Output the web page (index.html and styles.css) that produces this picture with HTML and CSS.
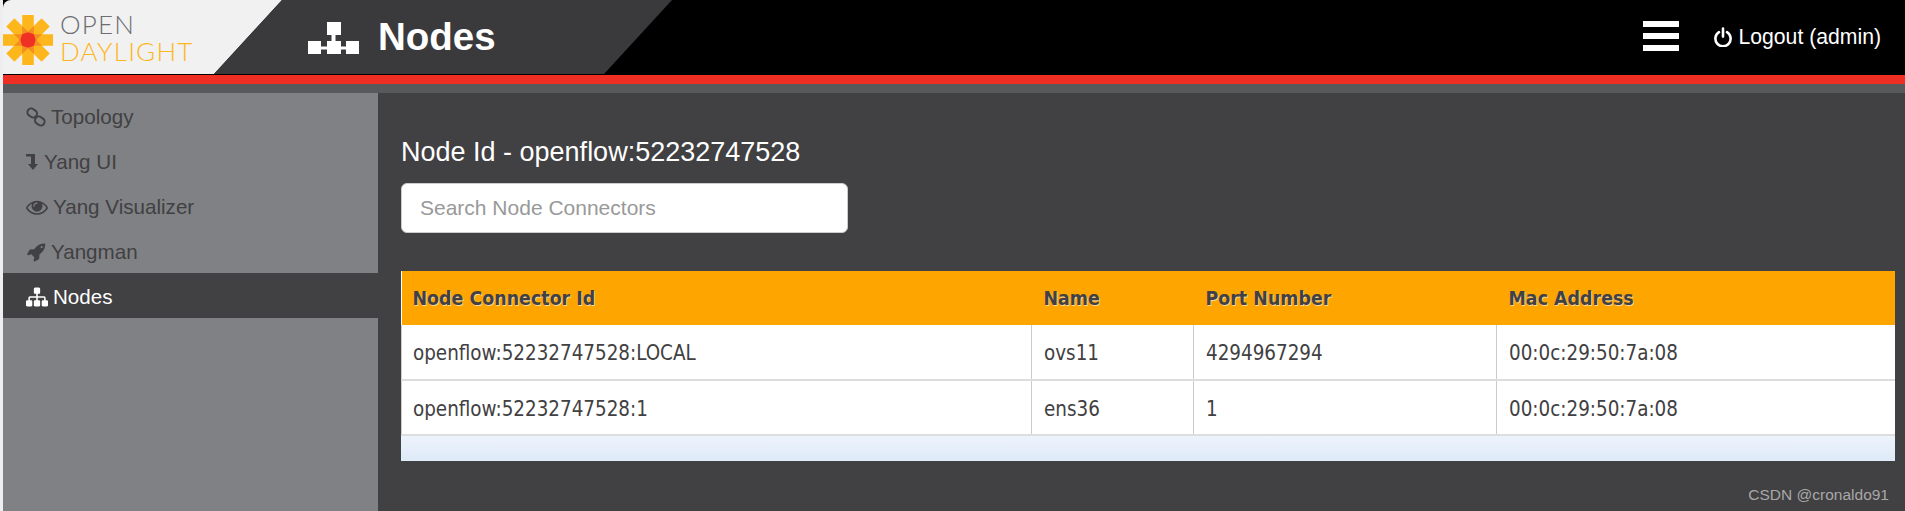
FILE: index.html
```html
<!DOCTYPE html>
<html lang="en">
<head>
    <meta charset="UTF-8">
    <meta name="viewport" content="width=device-width, initial-scale=1.0">
    <title>Nodes</title>
    <link rel="stylesheet" href="styles.css">
</head>
<body>
    <div class="page">
        <header class="topbar">
            <div class="logo-panel">
                <svg class="logo-mark" viewBox="0 0 52 52">
                    <g fill="#fdb61c">
                        <rect x="20" y="0" width="12" height="52"/>
                        <rect x="20" y="0" width="12" height="52" transform="rotate(45 26 26)"/>
                        <rect x="20" y="0" width="12" height="52" transform="rotate(90 26 26)"/>
                        <rect x="20" y="0" width="12" height="52" transform="rotate(135 26 26)"/>
                    </g>
                    <g fill="#f68b1f">
                        <polygon points="41.700,26 26,19.500 10.300,26 26,32.500" transform="rotate(22.500 26 26)"/>
                        <polygon points="41.700,26 26,19.500 10.300,26 26,32.500" transform="rotate(67.500 26 26)"/>
                        <polygon points="41.700,26 26,19.500 10.300,26 26,32.500" transform="rotate(112.500 26 26)"/>
                        <polygon points="41.700,26 26,19.500 10.300,26 26,32.500" transform="rotate(157.500 26 26)"/>
                    </g>
                    <polygon fill="#ee3124" points="26,18 32,20 34,26 32,32 26,34 20,32 18,26 20,20"/>
                </svg>
                <div class="logo-text">
                    <span class="logo-open">OPEN</span>
                    <span class="logo-day">DAYLIGHT</span>
                </div>
            </div>
            <div class="title-panel">
                <svg class="title-icon" viewBox="0 0 51 32">
                    <g fill="#fff">
                        <rect x="19" y="0" width="14" height="13"/>
                        <rect x="23.500" y="13" width="4" height="6"/>
                        <rect x="0" y="19" width="13" height="13"/>
                        <rect x="19" y="19" width="14" height="13"/>
                        <rect x="38" y="19" width="13" height="13"/>
                        <rect x="13" y="24.500" width="25" height="3"/>
                    </g>
                </svg>
                <h1 class="page-title">Nodes</h1>
            </div>
            <div class="top-actions">
                <div class="burger"><span></span><span></span><span></span></div>
                <a class="logout">
                    <svg class="power-icon" viewBox="0 0 18 20">
                        <path fill="none" stroke="#fff" stroke-width="2.600" stroke-linecap="round" d="M5 5.200a7.600 7.600 0 1 0 8 0M9 1.600v8"/>
                    </svg>
                    Logout (admin)
                </a>
            </div>
        </header>
        <div class="red-bar"></div>
        <div class="grey-bar"></div>

        <div class="layout">
            <nav class="sidebar">
                <a class="nav-item">
                    <svg class="nav-icon link-icon" viewBox="0 0 20 20">
                        <g fill="none" stroke="#414042" stroke-width="2">
                            <rect x="1.200" y="2.200" width="10" height="7.600" rx="3.800" transform="rotate(35 6.200 6)"/>
                            <rect x="8.800" y="10.200" width="10" height="7.600" rx="3.800" transform="rotate(35 13.800 14)"/>
                        </g>
                    </svg>
                    Topology
                </a>
                <a class="nav-item">
                    <svg class="nav-icon level-icon" viewBox="0 0 12 16">
                        <path fill="#414042" d="M0 0h9v10h3l-5 6-5-6h3V2.500H0z"/>
                    </svg>
                    Yang UI
                </a>
                <a class="nav-item">
                    <svg class="nav-icon eye-icon" viewBox="0 0 1792 1792">
                        <path fill="#414042" d="M1664 960q-152-236-381-353 61 104 61 225 0 185-131.500 316.500t-316.500 131.500-316.500-131.500-131.500-316.500q0-121 61-225-229 117-381 353 133 205 333.500 326.500t434.500 121.500 434.500-121.500 333.500-326.500zm-720-384q0-20-14-34t-34-14q-125 0-214.500 89.500t-89.500 214.500q0 20 14 34t34 14 34-14 14-34q0-86 61-147t147-61q20 0 34-14t14-34zm848 384q0 34-20 69-140 230-376.500 368.500t-499.500 138.500-499.500-139-376.500-368q-20-35-20-69t20-69q140-229 376.500-368t499.500-139 499.500 139 376.500 368q20 35 20 69z"/>
                    </svg>
                    Yang Visualizer
                </a>
                <a class="nav-item">
                    <svg class="nav-icon rocket-icon" viewBox="0 0 1792 1792">
                        <path fill="#414042" d="M1504 448q0-40-28-68t-68-28-68 28-28 68 28 68 68 28 68-28 28-68zm224-288q0 249-75.500 430.500t-253.500 360.500q-81 80-195 176l-20 379q-2 16-16 26l-384 224q-7 4-16 4-12 0-23-9l-64-64q-13-14-8-32l85-276-281-281-276 85q-3 1-9 1-14 0-23-9l-64-64q-17-19-5-39l224-384q10-14 26-16l379-20q96-114 176-195 188-187 358-258t431-71q14 0 24 9.500t10 22.500z"/>
                    </svg>
                    Yangman
                </a>
                <a class="nav-item active">
                    <svg class="nav-icon sitemap-icon" viewBox="0 0 1792 1792">
                        <path fill="#fff" d="M1792 1248v320q0 40-28 68t-68 28h-320q-40 0-68-28t-28-68v-320q0-40 28-68t68-28h96v-192h-512v192h96q40 0 68 28t28 68v320q0 40-28 68t-68 28h-320q-40 0-68-28t-28-68v-320q0-40 28-68t68-28h96v-192h-512v192h96q40 0 68 28t28 68v320q0 40-28 68t-68 28h-320q-40 0-68-28t-28-68v-320q0-40 28-68t68-28h96v-192q0-52 38-90t90-38h512v-192h-96q-40 0-68-28t-28-68v-320q0-40 28-68t68-28h320q40 0 68 28t28 68v320q0 40-28 68t-68 28h-96v192h512q52 0 90 38t38 90v192h96q40 0 68 28t28 68z"/>
                    </svg>
                    Nodes
                </a>
            </nav>

            <main class="content">
                <h2 class="node-title">Node Id - openflow:52232747528</h2>
                <input class="search" type="text" placeholder="Search Node Connectors">

                <table class="nodes-table">
                    <colgroup>
                        <col class="col-id">
                        <col class="col-name">
                        <col class="col-port">
                        <col class="col-mac">
                    </colgroup>
                    <thead>
                        <tr>
                            <th>Node Connector Id</th>
                            <th>Name</th>
                            <th>Port Number</th>
                            <th>Mac Address</th>
                        </tr>
                    </thead>
                    <tbody>
                        <tr>
                            <td>openflow:52232747528:LOCAL</td>
                            <td>ovs11</td>
                            <td>4294967294</td>
                            <td>00:0c:29:50:7a:08</td>
                        </tr>
                        <tr>
                            <td>openflow:52232747528:1</td>
                            <td>ens36</td>
                            <td>1</td>
                            <td>00:0c:29:50:7a:08</td>
                        </tr>
                    </tbody>
                </table>
                <div class="table-foot"></div>
                <div class="watermark">CSDN @cronaldo91</div>
            </main>
        </div>
    </div>
</body>
</html>
```

FILE: styles.css
```css
html, body {
    height: 100%;
}
body {
    margin: 0;
    overflow: hidden;
    background-color: #eeeef0;
    font-family: "Liberation Sans", Arial, sans-serif;
}
.page {
    display: flex;
    flex-direction: column;
    height: 100%;
    margin-left: 3px;
}

/* top bar */
.topbar {
    display: flex;
    align-items: stretch;
    height: 74px;
    border-bottom: 1px solid #000;
    background-color: #000;
}
.logo-panel {
    display: flex;
    flex: none;
    width: 279px;
    background-color: #f1f1f2;
    border-top-left-radius: 8px;
    clip-path: polygon(0 0, 100% 0, 211px 100%, 0 100%);
}
.logo-mark {
    flex: none;
    width: 50px;
    height: 50px;
    margin: 15px 0 0 0;
}
.logo-text {
    display: flex;
    flex-direction: column;
    margin: 11px 0 0 7px;
    font-family: Lato, "Liberation Sans", sans-serif;
    font-weight: 300;
    font-size: 26px;
    line-height: 27px;
    letter-spacing: 1.200px;
}
.logo-open {
    color: #6d6e71;
}
.logo-day {
    color: #fdb61c;
}
.title-panel {
    display: flex;
    align-items: center;
    flex: none;
    width: 458px;
    margin-left: -68px;
    background-color: #3a3a3c;
    clip-path: polygon(68px 0, 100% 0, 390px 100%, 0 100%);
}
.title-icon {
    width: 51px;
    height: 32px;
    margin: 2px 0 0 94px;
}
.page-title {
    margin: 0 0 0 19px;
    color: #fff;
    font-size: 38.500px;
    font-weight: bold;
}
.top-actions {
    display: flex;
    align-items: center;
    margin-left: auto;
    padding-right: 24px;
    color: #fff;
}
.burger {
    display: flex;
    flex-direction: column;
    gap: 6px;
    width: 36px;
    margin-right: 35px;
    margin-top: -2px;
}
.burger span {
    height: 6px;
    background-color: #fff;
}
.logout {
    display: flex;
    align-items: center;
    gap: 6px;
    font-size: 21.200px;
}
.power-icon {
    width: 18px;
    height: 20px;
}
.red-bar {
    flex: none;
    height: 9px;
    background-color: #ef2e24;
}
.grey-bar {
    flex: none;
    height: 9px;
    background-color: #58595b;
}

/* sidebar + content */
.layout {
    display: flex;
    flex: 1;
    min-height: 0;
}
.sidebar {
    flex: none;
    width: 375px;
    background-color: #808184;
}
.nav-item {
    display: flex;
    align-items: center;
    height: 45px;
    padding: 2px 0 0 23px;
    box-sizing: border-box;
    color: #414042;
    font-size: 20.600px;
}
.nav-item.active {
    background-color: #414042;
    color: #fff;
}
.nav-icon {
    flex: none;
    margin-right: 5px;
}
.link-icon {
    width: 20px;
    height: 20px;
}
.level-icon {
    width: 12px;
    height: 16px;
    margin-right: 6px;
}
.eye-icon {
    width: 22px;
    height: 22px;
}
.rocket-icon {
    width: 20px;
    height: 20px;
}
.sitemap-icon {
    width: 22px;
    height: 22px;
}
.content {
    position: relative;
    flex: 1;
    padding: 39px 10px 0 23px;
    background-color: #414042;
}
.node-title {
    margin: 0;
    color: #fff;
    font-size: 27px;
    font-weight: normal;
    line-height: 40px;
}
.search {
    display: block;
    width: 447px;
    height: 50px;
    margin: 11px 0 38px;
    padding: 0 18px;
    box-sizing: border-box;
    border: 1px solid #ccc;
    border-radius: 6px;
    background-color: #fff;
    font-family: "Liberation Sans", Arial, sans-serif;
    font-size: 21px;
}
.search::placeholder {
    color: #999;
    opacity: 1;
}

/* table */
.nodes-table {
    width: 100%;
    table-layout: fixed;
    border-collapse: collapse;
    background-color: #fff;
    font-family: "DejaVu Sans Condensed", "DejaVu Sans", sans-serif;
    font-stretch: condensed;
    font-size: 20.400px;
    color: #414042;
}
.col-id {
    width: 630px;
}
.col-name {
    width: 162px;
}
.col-port {
    width: 303px;
}
.nodes-table th {
    height: 54px;
    padding: 0 12px;
    background-color: #ffa500;
    text-align: left;
    font-size: 19.400px;
    font-weight: bold;
    text-shadow: 1px 1px 0 #f8d9a0;
}
.nodes-table td {
    height: 55px;
    padding: 2px 12px 0;
    box-sizing: border-box;
    border-bottom: 2px solid #ddd;
    border-left: 1px solid #ccc;
}
.nodes-table th:first-child,
.nodes-table td:first-child {
    padding-left: 11px;
}
.table-foot {
    height: 25px;
    background: linear-gradient(#edf3fb, #deeaf8);
}
.watermark {
    position: absolute;
    right: 16px;
    bottom: 7px;
    color: #a8a8a8;
    font-size: 15.500px;
}
```
